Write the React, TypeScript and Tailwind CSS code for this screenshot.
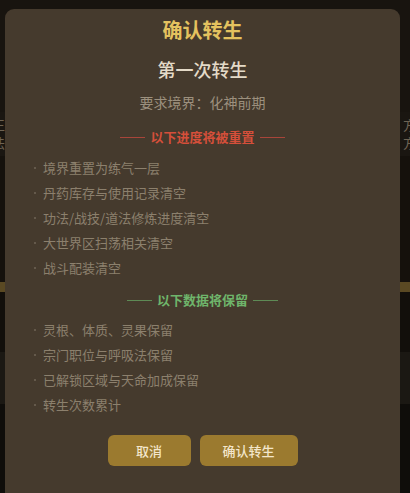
import React from "react";

const font = { fontFamily: '"Noto Sans CJK SC", "Noto Sans", sans-serif' };

function Divider({ text, color, line }: { text: string; color: string; line: string }) {
  return (
    <div className="flex items-center justify-center gap-[5px] h-[20px]">
      <div className={`h-px w-[25px] ${line}`} />
      <div className={`text-[13px] leading-[20px] font-bold ${color}`}>{text}</div>
      <div className={`h-px w-[25px] ${line}`} />
    </div>
  );
}

function Item({ text }: { text: string }) {
  return (
    <div className="flex items-center h-[25px] text-[13px] text-[#8c806d]">
      <span className="w-[2px] h-[2px] rounded-full bg-[#6f6556] mr-[7px]" />
      <span>{text}</span>
    </div>
  );
}

export default function App() {
  const reset = ["境界重置为练气一层", "丹药库存与使用记录清空", "功法/战技/道法修炼进度清空", "大世界区扫荡相关清空", "战斗配装清空"];
  const keep = ["灵根、体质、灵果保留", "宗门职位与呼吸法保留", "已解锁区域与天命加成保留", "转生次数累计"];
  return (
    <div className="relative w-[410px] h-[493px] overflow-hidden bg-[#15110c]" style={font}>
      {/* underlying page */}
      <div className="flex flex-col h-full">
        <div className="h-[112px] bg-[#18140f]" />
        <div className="h-[44px] flex justify-between items-center text-[13px] text-[#6e6353] bg-[#1a1611]">
          <div className="flex flex-col leading-[18px] -ml-[8px]"><span>王</span><span>法</span></div>
          <div className="flex flex-col leading-[18px] -mr-[6px]"><span>方</span><span>方</span></div>
        </div>
        <div className="h-[126px]" />
        <div className="h-[10px] bg-[#5a4923]" />
        <div className="h-[60px] bg-[#120f0b]" />
        <div className="h-[52px] bg-[#1b1813]" />
        <div className="flex-1 bg-[#0f0d0a]" />
      </div>

      {/* modal */}
      <div className="absolute left-[5px] top-[9px] w-[395px] h-[500px] rounded-[9px] bg-[#453a2d] pt-[7px] flex flex-col">
        <div className="text-center text-[20px] leading-[28px] font-bold text-[#e4c25f]">确认转生</div>
        <div className="mt-[12px] text-center text-[18px] leading-[26px] font-medium text-[#e4dac8]">第一次转生</div>
        <div className="mt-[10px] text-center text-[14px] leading-[20px] text-[#9c907e]">要求境界：化神前期</div>
        <div className="mt-[15px]">
          <Divider text="以下进度将被重置" color="text-[#d54f3a]" line="bg-[#a8453a]" />
        </div>
        <div className="mt-[8px] pl-[29px] flex flex-col">
          {reset.map((t) => (
            <Item key={t} text={t} />
          ))}
        </div>
        <div className="mt-[10px]">
          <Divider text="以下数据将保留" color="text-[#6fb56b]" line="bg-[#5e8a55]" />
        </div>
        <div className="mt-[7px] pl-[29px] flex flex-col">
          {keep.map((t) => (
            <Item key={t} text={t} />
          ))}
        </div>
        <div className="mt-[18px] flex justify-center gap-[9px]">
          <button className="w-[83px] h-[31px] rounded-[6px] bg-[#9b7a2f] text-[13px] font-medium text-[#f3e6cb]">取消</button>
          <button className="w-[98px] h-[31px] rounded-[6px] bg-[#9b7a2f] text-[13px] font-medium text-[#f3e6cb]">确认转生</button>
        </div>
      </div>
    </div>
  );
}
